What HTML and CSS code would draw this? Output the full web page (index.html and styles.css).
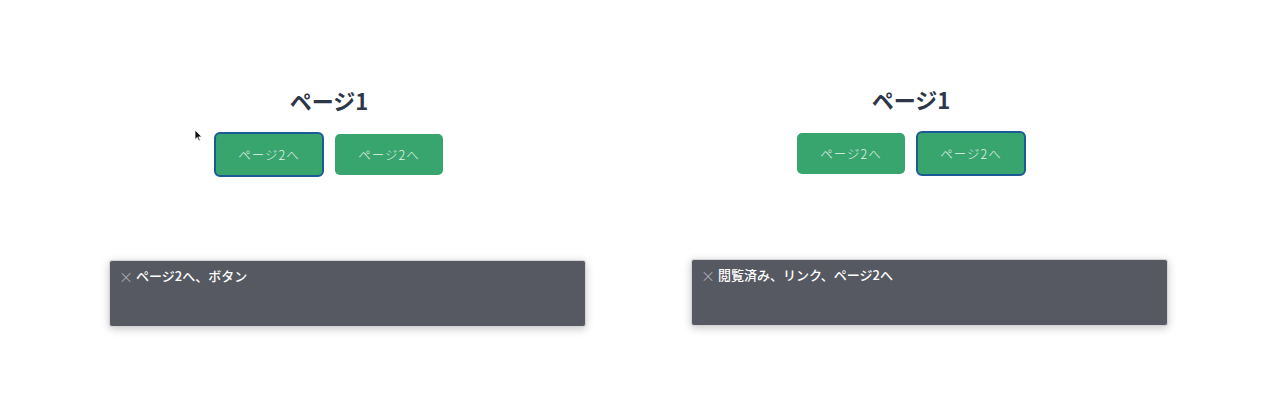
FILE: index.html
```html
<!DOCTYPE html>
<html lang="ja">
<head>
<meta charset="utf-8">
<title>ページ1</title>
<link rel="stylesheet" href="styles.css">
</head>
<body>
<div class="stage">
  <section class="frame frame-left">
    <h1 class="title">ページ1</h1>
    <div class="buttons">
      <button class="btn focus">ページ2へ</button>
      <button class="btn">ページ2へ</button>
    </div>
    <div class="caption"><span class="close">×</span><span class="caption-text">ページ2へ、ボタン</span></div>
    <svg class="cursor" width="9" height="13" viewBox="0 0 9 13"><path d="M1 1 L1 10.5 L3.3 8.4 L4.9 12 L6.3 11.4 L4.8 7.9 L7.8 7.9 Z" fill="#111" stroke="#fff" stroke-width="0.8"/></svg>
  </section>
  <section class="frame frame-right">
    <h1 class="title">ページ1</h1>
    <div class="buttons">
      <button class="btn">ページ2へ</button>
      <button class="btn focus">ページ2へ</button>
    </div>
    <div class="caption"><span class="close">×</span><span class="caption-text">閲覧済み、リンク、ページ2へ</span></div>
  </section>
</div>
</body>
</html>
```
FILE: styles.css
```css
html, body {
  margin: 0;
  padding: 0;
  background: #ffffff;
}
body {
  font-family: "Noto Sans CJK JP", "Noto Sans", sans-serif;
  width: 1280px;
  height: 419px;
  overflow: hidden;
}
.stage {
  display: flex;
  padding-left: 38px;
}
.frame {
  position: relative;
  width: 582px;
  display: flex;
  flex-direction: column;
  align-items: center;
  padding-top: 84px;
}
.frame-left {
  padding-top: 85px;
}
.title {
  margin: 0;
  font-size: 22px;
  line-height: 30px;
  font-weight: 700;
  color: #2d3748;
}
.buttons {
  display: flex;
  gap: 12px;
  margin-top: 19px;
  align-items: center;
  height: 41px;
}
.btn {
  width: 108px;
  height: 41px;
  box-sizing: border-box;
  border: none;
  border-radius: 5px;
  background: #38a46e;
  color: #e6f4ec;
  font-family: "Noto Sans CJK JP", "Noto Sans", sans-serif;
  font-size: 12.5px;
  font-weight: 300;
  padding: 0;
  letter-spacing: 1px;
}
.btn.focus {
  width: 110px;
  height: 45px;
  margin: 0 -1px;
  border: 2px solid #1c5a96;
  border-radius: 6px;
}
.caption {
  align-self: flex-start;
  margin-left: 71px;
  margin-top: 85px;
  width: 477px;
  height: 67px;
  box-sizing: border-box;
  background: #565961;
  border: 1px solid #d4d4d6;
  border-radius: 3px;
  box-shadow: 0 2px 8px rgba(0, 0, 0, 0.22);
  padding: 6px 0 0 9px;
  display: flex;
  align-items: flex-start;
  gap: 3px;
  color: #ffffff;
}
.close {
  color: #b9bbc0;
  font-size: 14px;
  line-height: 18px;
  font-weight: 300;
}
.caption-text {
  font-size: 13px;
  line-height: 18px;
  font-weight: 500;
}
.cursor {
  position: absolute;
  left: 156px;
  top: 129px;
}
```
